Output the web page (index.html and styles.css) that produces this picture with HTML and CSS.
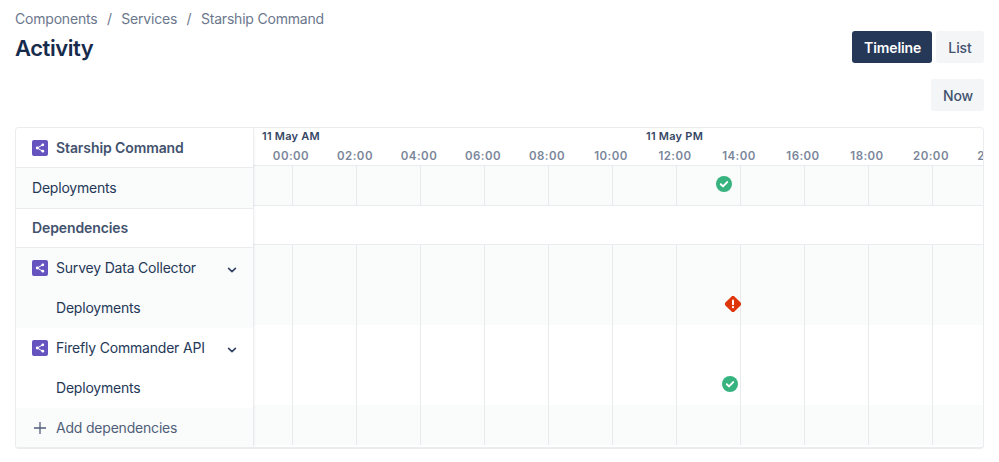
FILE: index.html
```html
<!DOCTYPE html>
<html lang="en">
<head>
<meta charset="utf-8">
<title>Activity</title>
<link rel="stylesheet" href="styles.css">
</head>
<body>
<svg class="defs" width="0" height="0" aria-hidden="true">
  <symbol id="svc" viewBox="0 0 16 16">
    <rect width="16" height="16" rx="2" fill="#6554c0"/>
    <path d="M5.2 8 10.6 4.9M5.2 8l5.4 3.1" fill="none" stroke="#fff" stroke-width="1"/>
    <circle cx="5.2" cy="8" r="1.4" fill="#fff"/>
    <circle cx="10.8" cy="4.8" r="1.4" fill="#fff"/>
    <circle cx="10.8" cy="11.2" r="1.4" fill="#fff"/>
  </symbol>
  <symbol id="chev" viewBox="0 0 10 10">
    <path d="M1.6 3.4 5 6.6l3.4-3.2" fill="none" stroke="#344563" stroke-width="1.7" stroke-linecap="round" stroke-linejoin="round"/>
  </symbol>
  <symbol id="ok" viewBox="0 0 16 16">
    <circle cx="8" cy="8" r="8" fill="#36b37e"/>
    <path d="M4.8 8.3 7 10.4l4.2-4.3" fill="none" stroke="#fff" stroke-width="2" stroke-linecap="round" stroke-linejoin="round"/>
  </symbol>
  <symbol id="fail" viewBox="0 0 16 16">
    <rect x="1.6" y="1.6" width="12.8" height="12.8" rx="2.4" transform="rotate(45 8 8)" fill="#de350b"/>
    <rect x="7" y="3.6" width="2" height="5.6" rx="1" fill="#fff"/>
    <circle cx="8" cy="11.2" r="1.15" fill="#fff"/>
  </symbol>
</svg>

<header class="page-head">
  <nav class="crumbs">
    <span>Components</span><span class="sep">/</span><span>Services</span><span class="sep">/</span><span>Starship Command</span>
  </nav>
  <div class="title-row">
    <h1 class="title">Activity</h1>
    <div class="toggle">
      <button class="btn btn-on">Timeline</button>
      <button class="btn btn-list">List</button>
    </div>
  </div>
  <div class="now-row"><button class="btn btn-now">Now</button></div>
</header>

<section class="card">
  <aside class="side">
    <div class="row row-head line-b">
      <svg class="ico"><use href="#svc"/></svg><span class="strong">Starship Command</span>
    </div>
    <div class="row row-plain grey line-b">Deployments</div>
    <div class="row row-plain line-b strong">Dependencies</div>
    <div class="group grey">
      <div class="row">
        <svg class="ico"><use href="#svc"/></svg><span class="name">Survey Data Collector</span><svg class="chev"><use href="#chev"/></svg>
      </div>
      <div class="row row-sub">Deployments</div>
    </div>
    <div class="group">
      <div class="row">
        <svg class="ico"><use href="#svc"/></svg><span class="name">Firefly Commander API</span><svg class="chev"><use href="#chev"/></svg>
      </div>
      <div class="row row-sub">Deployments</div>
    </div>
    <div class="row row-add grey">
      <svg class="plus" viewBox="0 0 14 14"><path d="M7 1v12M1 7h12" stroke="#505f79" stroke-width="1.3" fill="none"/></svg><span>Add dependencies</span>
    </div>
  </aside>
  <div class="chart">
    <div class="axis">
      <div class="days"><span class="day day-am">11 May AM</span><span class="day day-pm">11 May PM</span></div>
      <div class="hours">
        <span>00:00</span><span>02:00</span><span>04:00</span><span>06:00</span><span>08:00</span><span>10:00</span><span>12:00</span><span>14:00</span><span>16:00</span><span>18:00</span><span>20:00</span><span>22:00</span>
      </div>
    </div>
    <div class="lane lane-a grey"><svg class="mark m-1"><use href="#ok"/></svg></div>
    <div class="lane lane-b"></div>
    <div class="lane lane-c grey"><svg class="mark m-2"><use href="#fail"/></svg></div>
    <div class="lane lane-d"><svg class="mark m-3"><use href="#ok"/></svg></div>
    <div class="lane lane-e grey"></div>
  </div>
</section>
</body>
</html>
```
FILE: styles.css
```css
* { box-sizing: border-box; }
html, body { margin: 0; height: 100%; background: #fff; overflow: hidden; }
body {
  padding: 0 15px;
  font-family: Inter, "Liberation Sans", sans-serif;
  font-size: 14px;
  letter-spacing: -0.2px;
  color: #172b4d;
}
.defs { position: absolute; }

.page-head { display: flex; flex-direction: column; }
.crumbs {
  display: flex;
  gap: 9.5px;
  height: 20px;
  margin-top: 9px;
  line-height: 20px;
  color: #6b778c;
}
.title-row {
  display: flex;
  justify-content: space-between;
  align-items: flex-start;
  margin-top: 2px;
}
.title {
  margin: 1px 0 -1px;
  font-size: 22px;
  line-height: 32px;
  font-weight: 600;
  color: #172b4d;
  letter-spacing: -0.45px;
}
.toggle { display: flex; gap: 4px; }
.btn {
  height: 32px;
  padding: 0 12px;
  border: 0;
  border-radius: 3px;
  font: 500 14px Inter, "Liberation Sans", sans-serif;
  letter-spacing: -0.1px;
  color: #42526e;
  background: #f4f5f7;
}
.btn-on { width: 80px; background: #253858; color: #fff; font-weight: 600; }
.btn-list { width: 48px; padding: 0; }
.now-row { display: flex; justify-content: flex-end; margin-top: 16px; }
.btn-now { width: 53px; }

.card {
  display: flex;
  height: 322px;
  margin-top: 16px;
  background: #fff;
  border: 1px solid #ebecf0;
  border-bottom-width: 2px;
  border-radius: 4px;
  overflow: hidden;
}
.side {
  position: relative;
  z-index: 1;
  flex: 0 0 237px;
  display: flex;
  flex-direction: column;
  background: #fff;
  box-shadow: 1px 0 2px rgba(9, 30, 66, 0.1);
}
.grey { background: #fafbfb; }
.row {
  display: flex;
  align-items: center;
  height: 40px;
  padding: 0 16px 2px;
  gap: 8px;
  color: #253858;
  white-space: nowrap;
}
.row-plain { color: #253858; }
.row-head { height: 40px; padding-bottom: 0; }
.line-b { border-bottom: 1px solid #ebecf0; }
.row-plain.line-b.strong { height: 39px; }
.strong { font-weight: 600; color: #42526e; letter-spacing: -0.1px; }
.row-plain.grey { height: 41px; }
.ico { flex: none; width: 16px; height: 16px; margin-top: 2px; }
.row-head .ico { margin-top: 0; }
.name { flex: 1; }
.chev { flex: none; width: 10px; height: 10px; margin-top: 6px; }
.row-sub { padding-left: 40px; }
.row-add { color: #505f79; flex: 1; padding-bottom: 0; }
.plus { flex: none; width: 14px; height: 14px; margin: 0 1px; }

.chart {
  position: relative;
  flex: 1;
  min-width: 0;
  overflow: hidden;
  display: flex;
  flex-direction: column;
}
.axis { height: 38px; flex: none; border-bottom: 1px solid #ebecf0; }
.days {
  position: relative;
  height: 18px;
  font-size: 11px;
  font-weight: 600;
  line-height: 16px;
  letter-spacing: 0.25px;
  color: #344563;
}
.day { position: absolute; top: 0; white-space: nowrap; }
.day-am { left: 9px; }
.day-pm { left: 393px; }
.hours {
  display: flex;
  font-size: 11.5px;
  font-weight: 600;
  line-height: 20px;
  color: #7a869a;
  letter-spacing: 0.45px;
  margin-left: 6px;
}
.hours span { flex: 0 0 64px; text-align: center; }
.lane {
  position: relative;
  flex: none;
  background-image: linear-gradient(90deg, #e9eaee 1px, transparent 1px);
  background-size: 64px 100%;
  background-position: 39px 0;
}
.lane-a { height: 40px; border-bottom: 1px solid #ebecf0; }
.lane-b { height: 39px; background-image: none; border-bottom: 1px solid #ebecf0; }
.lane-c { height: 80px; }
.lane-d { height: 80px; }
.lane-e { height: 40px; }
.mark { position: absolute; width: 16px; height: 16px; }
.m-1 { left: 463px; top: 10px; }
.m-2 { left: 472px; top: 51px; }
.m-3 { left: 469px; top: 51px; }
```
